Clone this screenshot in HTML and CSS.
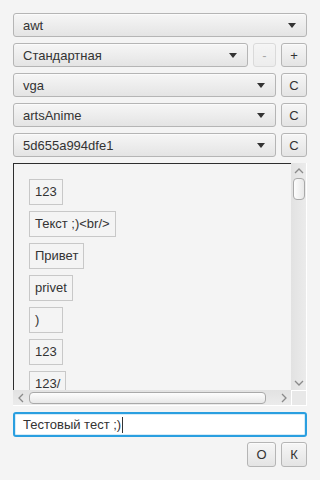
FILE: index.html
```html
<!DOCTYPE html>
<html lang="ru">
<head>
    <meta charset="UTF-8">
    <meta name="viewport" content="width=device-width, initial-scale=1.0">
    <title>Форма</title>
    <link rel="stylesheet" href="styles.css">
</head>
<body>
    <div class="window">
        <div class="row">
            <div class="combo">awt<span class="arrow"></span></div>
        </div>
        <div class="row">
            <div class="combo">Стандартная<span class="arrow"></span></div>
            <button class="btn btn-small" disabled>-</button>
            <button class="btn">+</button>
        </div>
        <div class="row">
            <div class="combo">vga<span class="arrow"></span></div>
            <button class="btn">С</button>
        </div>
        <div class="row">
            <div class="combo">artsAnime<span class="arrow"></span></div>
            <button class="btn">С</button>
        </div>
        <div class="row">
            <div class="combo">5d655a994dfe1<span class="arrow"></span></div>
            <button class="btn">С</button>
        </div>

        <div class="scroll-pane">
            <div class="viewport">
                <div class="chip">123</div>
                <div class="chip">Текст ;)&lt;br/&gt;</div>
                <div class="chip">Привет</div>
                <div class="chip">privet</div>
                <div class="chip">)</div>
                <div class="chip">123</div>
                <div class="chip">123/</div>
                <div class="chip">456</div>
            </div>
            <div class="vbar">
                <svg class="arr" width="10" height="6" viewBox="0 0 10 6"><path d="M1 5 L5 1 L9 5" fill="none" stroke="#8a8a8a" stroke-width="1.3"/></svg>
                <div class="vthumb"></div>
                <div class="spacer"></div>
                <svg class="arr" width="10" height="6" viewBox="0 0 10 6"><path d="M1 1 L5 5 L9 1" fill="none" stroke="#8a8a8a" stroke-width="1.3"/></svg>
            </div>
            <div class="hbar">
                <svg class="arr" width="6" height="10" viewBox="0 0 6 10"><path d="M5 1 L1 5 L5 9" fill="none" stroke="#8a8a8a" stroke-width="1.3"/></svg>
                <div class="hthumb"></div>
                <svg class="arr" width="6" height="10" viewBox="0 0 6 10"><path d="M1 1 L5 5 L1 9" fill="none" stroke="#8a8a8a" stroke-width="1.3"/></svg>
            </div>
            <div class="corner"></div>
        </div>

        <div class="text-field"><span class="value">Тестовый тест ;)</span></div>

        <div class="actions">
            <button class="btn btn-wide">О</button>
            <button class="btn">К</button>
        </div>
    </div>
</body>
</html>
```

FILE: styles.css
```css
html, body {
    margin: 0;
    padding: 0;
    background: #f4f4f4;
}
body {
    font-family: "Liberation Sans", Arial, sans-serif;
    font-size: 13px;
    color: #333;
}
.window {
    box-sizing: border-box;
    height: 480px;
    padding: 13px;
    display: flex;
    flex-direction: column;
}
.row {
    display: flex;
    gap: 5px;
    height: 24px;
    margin-bottom: 6px;
}
.combo {
    flex: 1;
    box-sizing: border-box;
    display: flex;
    align-items: center;
    padding: 0 9px;
    border: 1px solid #b5b5b5;
    border-radius: 3px;
    background: linear-gradient(#f6f6f6, #e4e4e4);
    box-shadow: inset 0 1px 0 #fbfbfb;
}
.arrow {
    margin-left: auto;
    width: 0;
    height: 0;
    border-left: 4px solid transparent;
    border-right: 4px solid transparent;
    border-top: 5px solid #333;
    margin-right: 1px;
}
.btn {
    box-sizing: border-box;
    width: 26px;
    height: 24px;
    padding: 0;
    border: 1px solid #b5b5b5;
    border-radius: 3px;
    background: linear-gradient(#f6f6f6, #e4e4e4);
    box-shadow: inset 0 1px 0 #fbfbfb;
    font-family: inherit;
    font-size: 13px;
    color: #333;
}
.btn-small {
    width: 23px;
}
.btn:disabled {
    opacity: 0.4;
}
.scroll-pane {
    flex: 1;
    display: grid;
    grid-template-columns: 1fr 15px;
    grid-template-rows: 1fr 15px;
    border-right: 1px solid #fff;
    border-bottom: 1px solid #fff;
    min-height: 0;
}
.viewport {
    overflow: hidden;
    border-top: 1px solid #2e2e2e;
    border-left: 1px solid #2e2e2e;
    padding: 15px;
    display: flex;
    flex-direction: column;
    align-items: flex-start;
    gap: 6px;
}
.chip {
    box-sizing: border-box;
    min-width: 34px;
    height: 26px;
    line-height: 24px;
    padding: 0 5px;
    border: 1px solid #c8c8c8;
    flex-shrink: 0;
}
.vbar {
    background: linear-gradient(to right, #e2e2e2, #ebebeb);
    display: flex;
    flex-direction: column;
    align-items: center;
    padding: 5px 0 4px;
}
.vthumb {
    box-sizing: border-box;
    width: 12px;
    height: 22px;
    margin-top: 4px;
    border: 1px solid #a9a9a9;
    border-radius: 4px;
    background: linear-gradient(to right, #fdfdfd, #e8e8e8);
}
.spacer {
    flex: 1;
}
.hbar {
    background: linear-gradient(#e2e2e2, #ebebeb);
    display: flex;
    align-items: center;
    padding: 0 4px 0 5px;
    gap: 5px;
}
.hthumb {
    box-sizing: border-box;
    width: 237px;
    height: 12px;
    border: 1px solid #a9a9a9;
    border-radius: 4px;
    background: linear-gradient(#fdfdfd, #e8e8e8);
    margin-right: auto;
}
.corner {
    background: #e8e8e8;
    border-left: 1px solid #fff;
    border-top: 1px solid #fff;
}
.arr {
    display: block;
}
.text-field {
    box-sizing: border-box;
    height: 25px;
    margin-top: 6px;
    padding: 0 8px;
    display: flex;
    align-items: center;
    background: #fff;
    border: 2px solid #2a9fe0;
    border-radius: 3px;
    box-shadow: inset 0 0 0 1px #d6ecf8;
}
.value {
    line-height: 16px;
    padding-right: 1px;
    border-right: 1px solid #333;
}
.actions {
    display: flex;
    justify-content: flex-end;
    gap: 5px;
    margin-top: 5px;
}
.actions .btn {
    height: 25px;
}
.btn-wide {
    width: 29px;
}
```
